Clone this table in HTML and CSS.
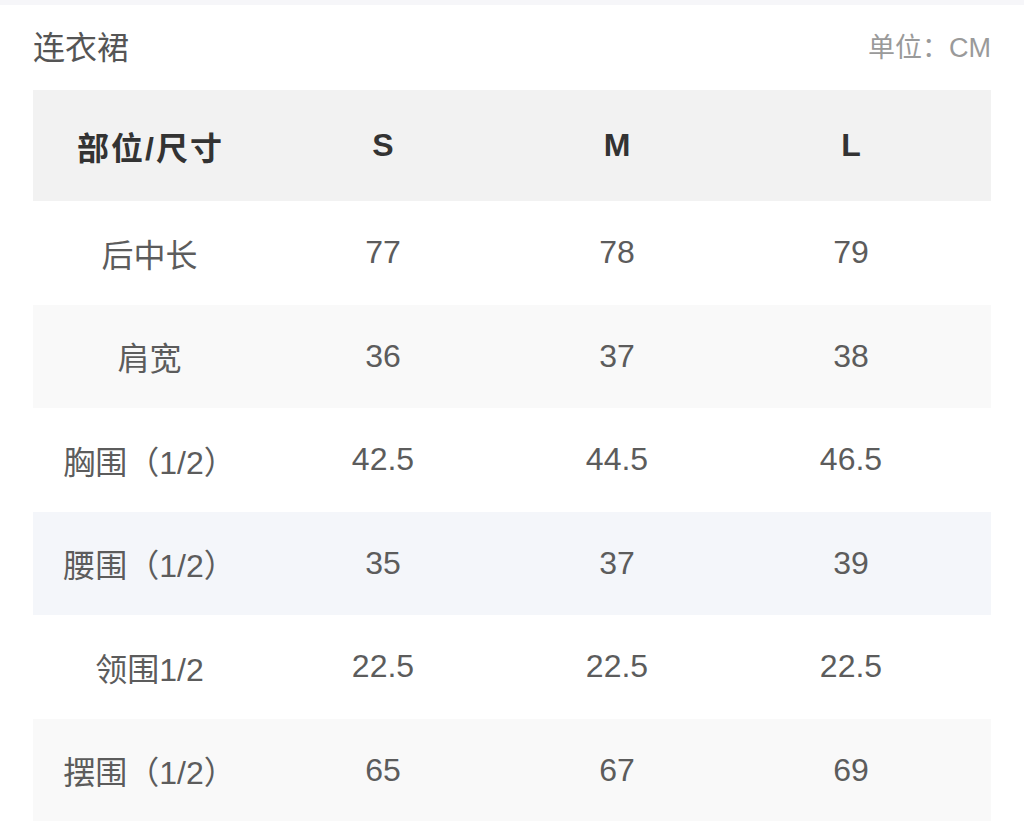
FILE: index.html
```html
<!DOCTYPE html>
<html lang="zh-CN">
<head>
<meta charset="utf-8">
<title>连衣裙 尺码表</title>
<link rel="stylesheet" href="styles.css">
</head>
<body>
<div class="topbar"></div>
<div class="head">
  <div class="title">连衣裙</div>
  <div class="unit">单位：CM</div>
</div>
<div class="table">
  <div class="row header">
    <div class="cell label">部位/尺寸</div><div class="cell">S</div><div class="cell">M</div><div class="cell">L</div>
  </div>
  <div class="row">
    <div class="cell">后中长</div><div class="cell">77</div><div class="cell">78</div><div class="cell">79</div>
  </div>
  <div class="row gray">
    <div class="cell">肩宽</div><div class="cell">36</div><div class="cell">37</div><div class="cell">38</div>
  </div>
  <div class="row">
    <div class="cell">胸围（1/2）</div><div class="cell">42.5</div><div class="cell">44.5</div><div class="cell">46.5</div>
  </div>
  <div class="row blue">
    <div class="cell">腰围（1/2）</div><div class="cell">35</div><div class="cell">37</div><div class="cell">39</div>
  </div>
  <div class="row">
    <div class="cell">领围1/2</div><div class="cell">22.5</div><div class="cell">22.5</div><div class="cell">22.5</div>
  </div>
  <div class="row gray">
    <div class="cell">摆围（1/2）</div><div class="cell">65</div><div class="cell">67</div><div class="cell">69</div>
  </div>
</div>
</body>
</html>
```

FILE: styles.css
```css
html, body {
  margin: 0;
  padding: 0;
  background: #ffffff;
  font-family: "Liberation Sans", "Noto Sans CJK SC", sans-serif;
  overflow: hidden;
}
.topbar {
  height: 5px;
  background: #f6f6f9;
}
.head {
  height: 85px;
  padding: 0 33px 5px;
  box-sizing: border-box;
  display: flex;
  align-items: center;
  justify-content: space-between;
}
.title {
  font-size: 32px;
  color: #555555;
}
.unit {
  font-size: 27px;
  color: #9a9a9a;
}
.table {
  margin: 0 33px;
  width: 958px;
}
.row {
  display: grid;
  grid-template-columns: 233px 234px 234px 234px;
  height: 103.5px;
  align-items: center;
  background: #ffffff;
}
.row.header {
  height: 111px;
  background: #f2f2f2;
}
.row.gray {
  background: #f9f9f9;
}
.row.blue {
  background: #f4f6fa;
}
.cell {
  text-align: center;
  font-size: 32px;
  color: #5c5c5c;
  white-space: nowrap;
}
.header .cell {
  font-weight: bold;
  color: #333333;
}
.header .cell.label {
  letter-spacing: 2px;
  text-indent: 2px;
}
```
